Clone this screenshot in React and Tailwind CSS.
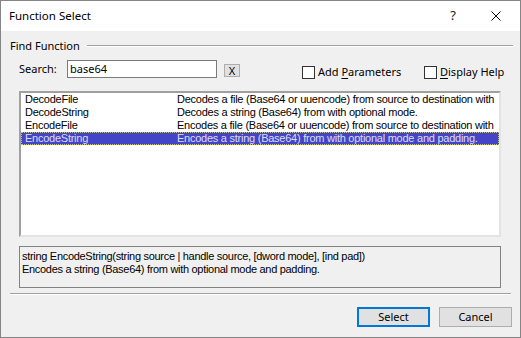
import React from 'react'

const ui = { fontFamily: '"Segoe UI", "Noto Sans", sans-serif' }
const ms = { fontFamily: '"Liberation Sans", Arial, sans-serif' }

const functions = [
  {
    name: 'DecodeFile',
    desc: 'Decodes a file (Base64 or uuencode) from source to destination with',
  },
  { name: 'DecodeString', desc: 'Decodes a string (Base64) from with optional mode.' },
  {
    name: 'EncodeFile',
    desc: 'Encodes a file (Base64 or uuencode) from source to destination with',
  },
  {
    name: 'EncodeString',
    desc: 'Encodes a string (Base64) from with optional mode and padding.',
  },
]

function Checkbox({ pre, hotkey, rest }) {
  return (
    <div className="flex items-center">
      <div className="w-[13px] h-[13px] border border-[#333333] bg-white shrink-0" />
      <span className="ml-[3px] text-[11px] leading-[14px] text-black whitespace-nowrap" style={ui}>
        {pre}
        <span className="underline underline-offset-2">{hotkey}</span>
        {rest}
      </span>
    </div>
  )
}

function FunctionRow({ name, desc, selected }) {
  return (
    <div
      className={
        selected
          ? 'flex h-[13px] items-center border border-dotted border-[#c8c864] bg-[#4444c8] text-[#dcdcf4]'
          : 'flex h-[13px] items-center border border-transparent text-black'
      }
    >
      <span className="w-[155px] shrink-0 pl-[3px] whitespace-nowrap">{name}</span>
      <span className="flex-1 whitespace-nowrap">{desc}</span>
    </div>
  )
}

export default function App() {
  return (
    <div className="w-[521px] h-[338px] border border-[#858585] bg-[#f0f0f0] flex flex-col overflow-hidden">
      {/* title bar */}
      <div className="h-[30px] bg-white flex items-center pl-[8px] shrink-0">
        <span className="text-[11.5px] text-black" style={ui}>
          Function Select
        </span>
        <span className="ml-auto text-[13px] text-[#222222] w-[20px] text-center" style={ui}>
          ?
        </span>
        <div className="w-[46px] ml-[10px] mr-[1px] flex justify-center">
          <svg width="10" height="10" viewBox="0 0 10 10">
            <path d="M0.5 0.5 L9.5 9.5 M9.5 0.5 L0.5 9.5" stroke="#111111" strokeWidth="1" />
          </svg>
        </div>
      </div>

      {/* group header */}
      <div className="flex items-center h-[16px] mt-[7px] pl-[9px] pr-[7px]">
        <span className="text-[11px] text-black" style={ui}>
          Find Function
        </span>
        <div className="flex-1 ml-[7px] h-[2px] border-t border-[#a0a0a0] border-b border-b-white" />
      </div>

      <div className="pl-[18px] pr-[19px]">
        {/* search row */}
        <div className="flex items-start mt-[6px] h-[18px]">
          <span className="w-[48px] shrink-0 text-[11px] leading-[18px] text-black" style={ui}>
            Search:
          </span>
          <div
            className="w-[150px] shrink-0 h-[18px] border border-[#7a7a7a] bg-white pl-[2px] text-[11px] leading-[16px] text-black"
            style={ui}
          >
            base64
          </div>
          <div
            className="ml-[7px] mt-[4px] w-[16px] h-[13px] shrink-0 border border-[#adadad] bg-[#e1e1e1] flex items-center justify-center text-[11px] leading-[11px] text-black"
            style={ui}
          >
            X
          </div>
          <div className="ml-[62px] mt-[5px] w-[122px] shrink-0">
            <Checkbox pre="Add " hotkey="P" rest="arameters" />
          </div>
          <div className="mt-[5px] shrink-0">
            <Checkbox pre="" hotkey="D" rest="isplay Help" />
          </div>
        </div>

        {/* list */}
        <div
          className="mt-[13px] h-[146px] border-2 border-t-[#a0a0a0] border-l-[#a0a0a0] border-r-[#e3e3e3] border-b-[#e3e3e3] bg-white text-[11px] leading-[13px] tracking-[-0.25px] overflow-hidden"
          style={ms}
        >
          {functions.map((f, i) => (
            <FunctionRow key={f.name} name={f.name} desc={f.desc} selected={i === 3} />
          ))}
        </div>

        {/* description */}
        <div
          className="mt-[9px] h-[42px] border border-[#828282] pl-[2px] pt-[3px] text-[11px] leading-[13px] tracking-[-0.3px] text-black"
          style={ms}
        >
          <div>string EncodeString(string source | handle source, [dword mode], [ind pad])</div>
          <div>Encodes a string (Base64) from with optional mode and padding.</div>
        </div>
      </div>

      {/* separator */}
      <div className="mt-[5px] mx-[9px] h-[2px] border-t border-[#a0a0a0] border-b border-b-white" />

      {/* buttons */}
      <div className="flex justify-end gap-[9px] mt-[12px] pr-[8px]">
        <button
          className="w-[73px] h-[20px] border-2 border-[#0078d7] bg-[#e1e1e1] text-[11px] text-black"
          style={ui}
        >
          Select
        </button>
        <button
          className="w-[73px] h-[20px] border border-[#adadad] bg-[#e1e1e1] text-[11px] text-black"
          style={ui}
        >
          Cancel
        </button>
      </div>
    </div>
  )
}
